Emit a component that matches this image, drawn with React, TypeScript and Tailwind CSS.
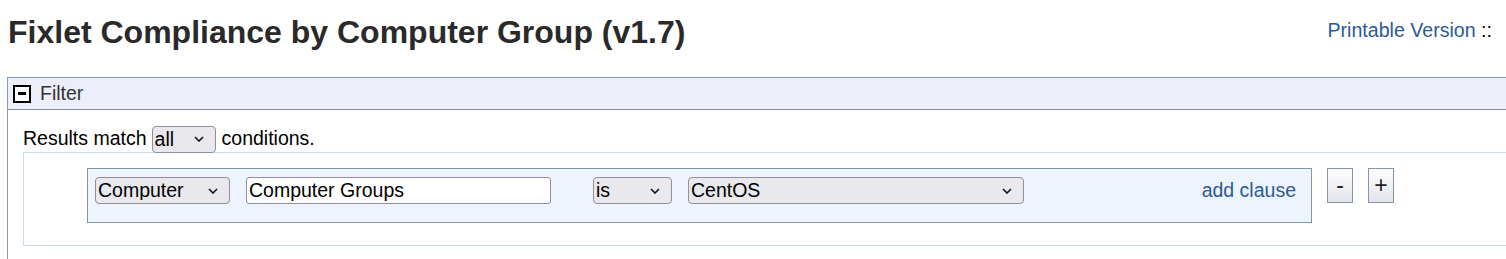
import React from 'react';

const font = "font-['Liberation_Sans',Arial,sans-serif]";

const Chevron = () => (
  <svg
    width="10"
    height="6"
    viewBox="0 0 10 6"
    className="pointer-events-none absolute right-[12px] top-[11px]"
  >
    <path d="M1 1l4 4 4-4" fill="none" stroke="#111" strokeWidth="1.6" />
  </svg>
);

const Select = ({ value, options, className }: { value: string; options: string[]; className: string }) => (
  <div className={`relative h-[27px] ${className}`}>
    <select
      defaultValue={value}
      className="h-full w-full appearance-none rounded-[4px] border border-[#8f8f9d] bg-[#e9e8ed] pl-[2px] text-[19.5px] leading-none text-black outline-none"
    >
      {options.map(o => (
        <option key={o}>{o}</option>
      ))}
    </select>
    <Chevron />
  </div>
);

const SmallButton = ({ label }: { label: string }) => (
  <button className="flex h-[35px] w-[26px] items-center justify-center border border-[#8595a8] bg-gradient-to-b from-white to-[#e3e4ec] text-[23px] leading-none text-[#222]">
    {label}
  </button>
);

export default function App() {
  return (
    <div className={`${font} h-[259px] w-full overflow-hidden bg-white text-black`}>
      <div className="flex h-[77px] items-start justify-between pl-[8px] pr-[14px]">
        <h1 className="pt-[14px] text-[32px] font-bold leading-[37px] text-[#2a2a2a]">
          Fixlet Compliance by Computer Group (v1.7)
        </h1>
        <div className="pt-[18px] text-[19.6px] leading-[24px]">
          <a href="#" className="text-[#2c5a94]">Printable Version</a>
          <span className="text-black"> ::</span>
        </div>
      </div>

      <div className="ml-[7px] border-l border-t border-[#8a9aab]">
        <div className="flex h-[32px] items-center border-b border-[#7d8fa3] bg-[#eceef9] pl-[5px]">
          <div className="flex h-[18px] w-[18px] items-center justify-center border-2 border-black bg-white">
            <div className="h-[3px] w-[8px] bg-black" />
          </div>
          <span className="ml-[9px] text-[19.5px] leading-none text-[#333]">Filter</span>
        </div>

        <div className="pb-[20px] pl-[15px] pt-[15px]">
          <div className="flex h-[27px] items-center text-[19.5px]">
            <span>Results match</span>
            <Select value="all" options={['all', 'any']} className="ml-[5px] w-[64px]" />
            <span className="ml-[6px]">conditions.</span>
          </div>

          <div className="flex h-[94px] items-start border-y border-l border-[#c6ddef] pl-[63px] pt-[15px]">
            <div className="flex h-[55px] w-[1225px] items-start border border-[#7f95a8] bg-[#edf4fd] pl-[7px] pr-[15px] pt-[8px]">
              <Select value="Computer" options={['Computer']} className="w-[135px]" />
              <input
                defaultValue="Computer Groups"
                className="ml-[16px] h-[27px] w-[305px] rounded-[3px] border border-[#8f8f9d] bg-white pl-[2px] text-[19.5px] text-black outline-none"
              />
              <Select value="is" options={['is', 'is not']} className="ml-[42px] w-[79px]" />
              <Select value="CentOS" options={['CentOS']} className="ml-[16px] w-[336px]" />
              <a href="#" className="ml-auto flex h-[27px] items-center text-[19.5px] text-[#2c5a94]">
                add clause
              </a>
            </div>
            <div className="ml-[15px] flex gap-[15px]">
              <SmallButton label="-" />
              <SmallButton label="+" />
            </div>
          </div>
        </div>
      </div>
    </div>
  );
}
